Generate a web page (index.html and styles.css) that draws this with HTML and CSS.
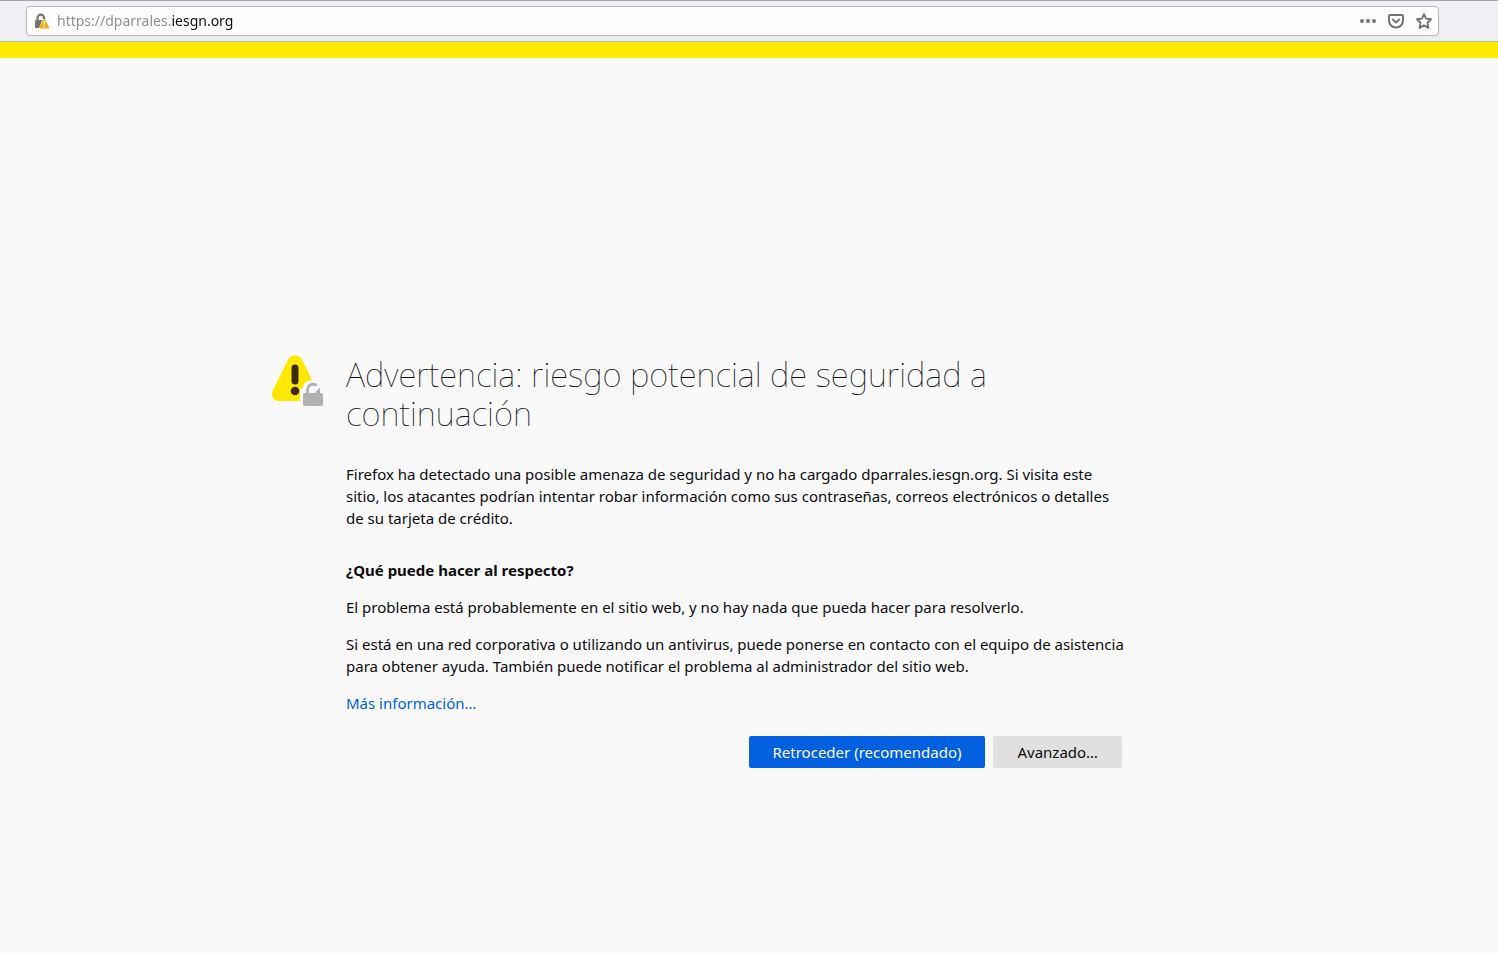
FILE: index.html
```html
<!DOCTYPE html>
<html lang="es">
<head>
<meta charset="utf-8">
<meta name="viewport" content="width=device-width, initial-scale=1">
<title>Advertencia: riesgo potencial de seguridad a continuación</title>
<link rel="stylesheet" href="styles.css">
</head>
<body>
<header class="toolbar">
  <form class="urlbar">
    <button class="urlbar-button" type="button" aria-label="Información del sitio">
      <svg width="16" height="16" viewBox="0 0 16 16">
        <path d="M3.500 8V5a3.300 3.300 0 0 1 6.600 0v1" fill="none" stroke="#737373" stroke-width="2.200"/>
        <path d="M2 7h6.500L5 15H2a1 1 0 0 1-1-1V8a1 1 0 0 1 1-1z" fill="#737373"/>
        <path d="M10.300 6.800 14.400 14.700H6.200z" fill="#ffa60a" stroke="#ffa60a" stroke-width="1.600" stroke-linejoin="round"/>
        <path d="M9.600 8.300h1.400v3.700H9.600zM9.600 12.800h1.400v1.400H9.600z" fill="#fff"/>
      </svg>
    </button>
    <input class="urlbar-input" type="text" aria-label="Dirección" value="https://dparrales.iesgn.org" spellcheck="false">
    <div class="urlbar-actions">
      <button class="urlbar-button" type="button" aria-label="Acciones de página">
        <svg width="16" height="16" viewBox="0 0 16 16" fill="#737373"><circle cx="2" cy="8" r="2"/><circle cx="8" cy="8" r="2"/><circle cx="14" cy="8" r="2"/></svg>
      </button>
      <button class="urlbar-button" type="button" aria-label="Guardar en Pocket">
        <svg width="16" height="16" viewBox="0 0 16 16" fill="none" stroke="#737373" stroke-width="2" stroke-linecap="round" stroke-linejoin="round"><path d="M2 2h12a1 1 0 0 1 1 1v4.500a7 7 0 0 1-14 0V3a1 1 0 0 1 1-1z"/><path d="M4.800 6.500 8 9.500l3.200-3"/></svg>
      </button>
      <button class="urlbar-button" type="button" aria-label="Añadir a marcadores">
        <svg width="16" height="16" viewBox="0 0 16 16" fill="none" stroke="#737373" stroke-width="1.900" stroke-linejoin="round"><path d="M8 1.100 10 5.600l5 .6-3.600 3.500 1 5.200L8 12.400l-4.400 2.500 1-5.200L1 6.200l5-.6z"/></svg>
      </button>
    </div>
  </form>
</header>
<main class="page">
  <div class="container">
    <svg class="warning-icon" width="52" height="52" viewBox="0 0 52 52" aria-hidden="true">
      <path d="M16.200 4.200C19-1.200 27-1.200 29.800 4.200L45 35c3 6-.5 11-6 11H7c-5.500 0-9-5-6-11z" fill="#ffe900"/>
      <path d="M23 13v13" stroke="#3e2800" stroke-width="7" stroke-linecap="round"/>
      <circle cx="23" cy="36" r="4.300" fill="#3e2800"/>
      <path d="M28 54V36q0-3 3-3.500C31 23 50 22 51 32l3 2v20z" fill="#f9f9fa"/>
      <rect x="31" y="38" width="20" height="13" rx="2" fill="#b1b1b3"/>
      <path d="M35.500 39v-3.500c0-4 2.300-6.200 5.500-6.200 1.500 0 2.700.4 3.600 1.200" fill="none" stroke="#b1b1b3" stroke-width="3"/>
      <path d="M48 32.500V39H43.500v-2z" fill="#b1b1b3"/>
    </svg>
    <div class="content">
      <h1 class="title">Advertencia: riesgo potencial de seguridad a continuación</h1>
      <p class="lead">Firefox ha detectado una posible amenaza de seguridad y no ha cargado dparrales.iesgn.org. Si visita este sitio, los atacantes podrían intentar robar información como sus contraseñas, correos electrónicos o detalles de su tarjeta de crédito.</p>
      <h2 class="subtitle">¿Qué puede hacer al respecto?</h2>
      <p class="text">El problema está probablemente en el sitio web, y no hay nada que pueda hacer para resolverlo.</p>
      <p class="text">Si está en una red corporativa o utilizando un antivirus, puede ponerse en contacto con el equipo de asistencia para obtener ayuda. También puede notificar el problema al administrador del sitio web.</p>
      <p class="text"><a class="link" href="#">Más información…</a></p>
      <div class="buttons">
        <button class="button button-primary" type="button">Retroceder (recomendado)</button>
        <button class="button" type="button">Avanzado…</button>
      </div>
    </div>
  </div>
</main>
</body>
</html>
```
FILE: styles.css
```css
* {
  box-sizing: border-box;
}

body {
  display: flex;
  flex-direction: column;
  min-height: 100vh;
  margin: 0;
  background: #f9f9fa;
  color: #0c0c0d;
  font-family: "Noto Sans", sans-serif;
  font-size: 15px;
  line-height: 22px;
}

.toolbar {
  padding: 5px 59px 5px 26px;
  border-top: 1px solid #a5a5a9;
  border-bottom: 1px solid #b8b8bb;
  background: #f0f1f4;
}

.urlbar {
  display: flex;
  align-items: center;
  height: 30px;
  padding: 0 6px 0 7px;
  border: 1px solid #b9b9bb;
  border-radius: 4px;
  background: #fdfdfd;
  box-shadow: 0 1px 4px rgba(0, 0, 0, 0.05);
}

.urlbar-button {
  display: flex;
  padding: 0;
  border: 0;
  background: none;
}

.urlbar-input {
  flex: 1;
  min-width: 0;
  height: 28px;
  margin-left: 7px;
  padding: 0 0 2px;
  border: 0;
  outline: 0;
  background: linear-gradient(to right, #8c8c8c 115px, #0c0c0d 115px);
  background-clip: text;
  -webkit-background-clip: text;
  color: #0c0c0d;
  -webkit-text-fill-color: transparent;
  font-family: inherit;
  font-size: 14px;
}

.urlbar-actions {
  display: flex;
  gap: 12px;
}

.page {
  display: flex;
  flex: 1;
  align-items: center;
  justify-content: center;
  padding: 112px 100px 0 0;
  border-top: 16px solid #ffe900;
}

.container {
  display: flex;
  gap: 22px;
}

.warning-icon {
  flex: none;
}

.content {
  max-width: 780px;
}

.title {
  margin: 0 0 30px;
  font-size: 33px;
  font-weight: 100;
  line-height: 39px;
}

.lead {
  margin: 0 0 30px;
}

.subtitle {
  margin: 0 0 15px;
  font-size: 15px;
  font-weight: 700;
}

.text {
  margin: 0 0 15px;
}

.link {
  color: #0060df;
  text-decoration: none;
}

.buttons {
  display: flex;
  justify-content: flex-end;
  gap: 8px;
  margin: 22px 4px 0 0;
}

.button {
  height: 32px;
  padding: 0 24px;
  border: 0;
  border-radius: 2px;
  background: #e0e0e1;
  color: #0c0c0d;
  font-family: inherit;
  font-size: 15px;
}

.button-primary {
  background: #0060df;
  color: #f9f9fa;
}
```
